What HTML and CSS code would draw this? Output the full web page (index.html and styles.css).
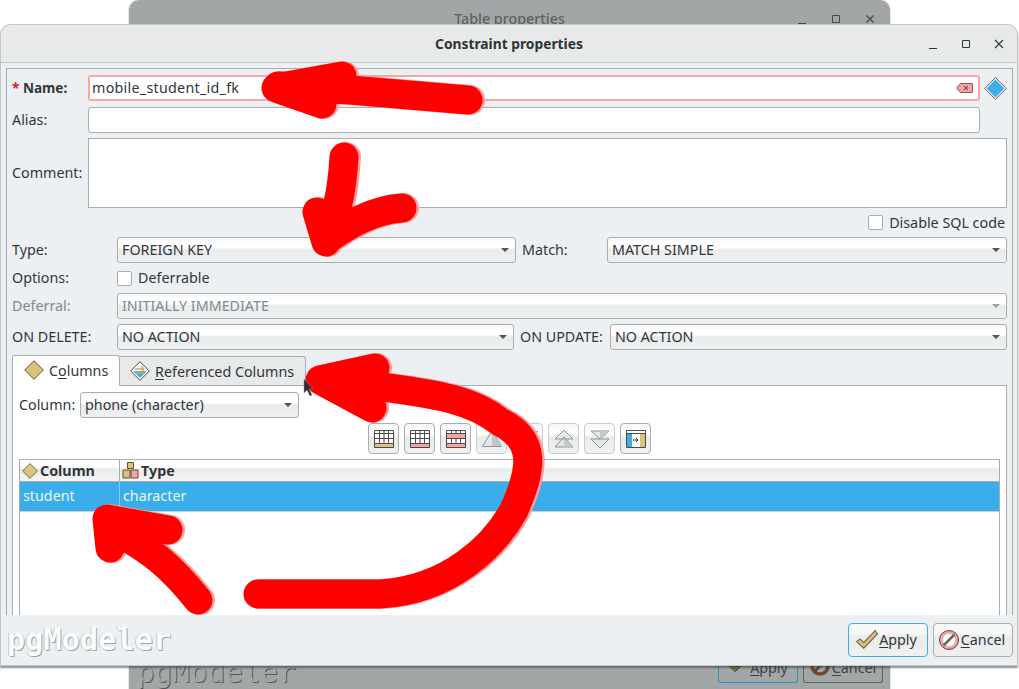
FILE: index.html
```html
<!DOCTYPE html>
<html lang="en">
<head>
<meta charset="utf-8">
<title>Constraint properties</title>
<link rel="stylesheet" href="styles.css">
</head>
<body>
<svg class="defs" width="0" height="0" aria-hidden="true">
  <defs>
    <g id="grid">
      <path d="M1.5 1.500h19v17h-19z" fill="#fff"/>
      <path d="M1.500 1.500h19v17h-19zM1.500 4.500h19M1.500 9.500h19M1.500 14.500h19M6.500 1.500v17M11 1.500v17M15.500 1.500v17" fill="none" stroke="#4a4a4a"/>
    </g>
    <g id="scrib" fill="none" stroke-linecap="round" stroke-linejoin="round">
      <path d="M468 100L350 90L278 86M342 76L276 88L322 104"/>
      <path d="M344 157C342 190 338 210 326 240M402 208C372 210 348 225 326 240M317 212L326 242"/>
      <path d="M258 594L380 594C450 590 495 545 514 510C532 470 537 440 500 422C470 398 430 394 390 388L330 380M375 368L320 380L372 408"/>
      <path d="M198 600C170 565 150 550 118 532M168 530L107 519L110 548"/>
    </g>
  </defs>
</svg>

<div class="desk">
  <section class="win back">
    <header class="back-title">
      <span class="back-name">Table properties</span>
      <span class="back-ctl">
        <svg width="12" height="12" viewBox="0 0 12 12"><path d="M2 10.500h8" stroke="#44494b"/></svg>
        <svg width="12" height="12" viewBox="0 0 12 12"><path d="M2.500 2.500h7v7h-7z" fill="none" stroke="#44494b"/></svg>
        <svg width="12" height="12" viewBox="0 0 12 12"><path d="M2.500 2.500l7 7M9.500 2.500l-7 7" stroke="#44494b" stroke-width="1.300"/></svg>
      </span>
    </header>
    <footer class="back-foot">
      <span class="logo ghost">pgModeler</span>
      <span class="back-btns">
        <span class="back-btn focus">
          <svg width="20" height="18" viewBox="0 0 22 20"><path d="M1.500 11.500L4.500 9L8 12.500L18.500 1.500L20.500 4.500L8 17.500z" fill="#7a6f4c" stroke="#3e3a2d"/></svg>
          <span><u>A</u>pply</span>
        </span>
        <span class="back-btn">
          <svg width="20" height="20" viewBox="0 0 20 20"><circle cx="10" cy="10" r="8" fill="none" stroke="#70492f" stroke-width="3.500"/><path d="M4.500 15.500L15.500 4.500" stroke="#70492f" stroke-width="3"/></svg>
          <span><u>C</u>ancel</span>
        </span>
      </span>
    </footer>
  </section>

  <section class="win front">
    <header class="title">
      <span class="title-text">Constraint properties</span>
      <span class="ctl">
        <svg width="12" height="12" viewBox="0 0 12 12"><path d="M2 10.500h8" stroke="#31363b"/></svg>
        <svg width="12" height="12" viewBox="0 0 12 12"><path d="M2.500 2.500h7v7h-7z" fill="none" stroke="#31363b"/></svg>
        <svg width="12" height="12" viewBox="0 0 12 12"><path d="M2 2l8 8M10 2l-8 8" stroke="#31363b" stroke-width="1.100"/></svg>
      </span>
    </header>

    <main class="content">
      <div class="frame">
        <div class="row name-row">
          <label class="lbl lbl-name"><span class="req">*</span> Name:</label>
          <div class="input input-err">
            <span class="value">mobile_student_id_fk</span>
            <svg class="clear" width="17" height="10" viewBox="0 0 17 10"><path d="M.500 5L4.500.500h12v9h-12z" fill="#f5a3a3" stroke="#8a5a5a"/><path d="M8 3l4 4M12 3l-4 4" stroke="#6b3a3a"/></svg>
          </div>
          <svg class="diamond" width="23" height="23" viewBox="0 0 23 23"><path d="M11.500 .7L22.300 11.500L11.500 22.300L.7 11.500z" fill="#fff" stroke="#333" stroke-width=".8"/><path d="M11.500 2.500L20.500 11.500L11.500 20.500L2.500 11.500z" fill="#3daee9"/></svg>
        </div>
        <div class="row alias-row">
          <label class="lbl lbl-first">Alias:</label>
          <div class="input"></div>
          <span class="diamond-gap"></span>
        </div>
        <div class="row comment-row">
          <label class="lbl lbl-first">Comment:</label>
          <div class="textarea"></div>
        </div>
        <div class="row sql-row">
          <span class="check"></span><span class="txt">Disable SQL code</span>
        </div>
        <div class="row type-row">
          <label class="lbl lbl-wide">Type:</label>
          <div class="select sel-type">FOREIGN KEY<i class="arrow"></i></div>
          <label class="lbl lbl-match">Match:</label>
          <div class="select grow">MATCH SIMPLE<i class="arrow"></i></div>
        </div>
        <div class="row opt-row">
          <label class="lbl lbl-wide">Options:</label>
          <span class="check"></span><span class="txt">Deferrable</span>
        </div>
        <div class="row def-row">
          <label class="lbl lbl-wide off">Deferral:</label>
          <div class="select grow disabled">INITIALLY IMMEDIATE<i class="arrow"></i></div>
        </div>
        <div class="row del-row">
          <label class="lbl lbl-wide">ON DELETE:</label>
          <div class="select sel-del">NO ACTION<i class="arrow"></i></div>
          <label class="lbl lbl-upd">ON UPDATE:</label>
          <div class="select grow">NO ACTION<i class="arrow"></i></div>
        </div>

        <div class="tabs">
          <div class="tab active">
            <svg width="20" height="20" viewBox="0 0 20 20"><path d="M10 .7L19.300 10L10 19.300L.7 10z" fill="#dcc27a" stroke="#5d5130"/></svg>
            <span>C<u>o</u>lumns</span>
          </div>
          <div class="tab">
            <svg width="20" height="20" viewBox="0 0 20 20"><path d="M10 .7L19.300 10L10 19.300L.7 10z" fill="#fff" stroke="#444"/><path d="M3 10h14L10 17z" fill="#3daee9"/><path d="M5 8h9M11 5l3 3-3 3M15 12H6" fill="none" stroke="#c9a95a" stroke-width="1.300"/></svg>
            <span><u>R</u>eferenced Columns</span>
          </div>
        </div>
        <div class="pane">
          <div class="row col-row">
            <label class="lbl">Column:</label>
            <div class="select sel-col">phone (character)<i class="arrow"></i></div>
          </div>
          <div class="toolbar">
            <span class="tool"><svg width="22" height="20" viewBox="0 0 22 20"><use href="#grid"/><path d="M2 15h18v3H2z" fill="#dcc27a"/></svg></span>
            <span class="tool"><svg width="22" height="20" viewBox="0 0 22 20"><use href="#grid"/><path d="M2 15h18v3H2z" fill="#f5a3a3"/></svg></span>
            <span class="tool"><svg width="22" height="20" viewBox="0 0 22 20"><use href="#grid"/><path d="M2 5h18v4H2zM2 15h18v3H2z" fill="#f5a3a3"/></svg></span>
            <span class="tool dim"><svg width="22" height="20" viewBox="0 0 22 20"><path d="M11 1.500L20.500 17.500H1.500z" fill="#e4e7e8" stroke="#8c9496"/><path d="M11 2v15h9z" fill="#c3c8ca"/></svg></span>
            <span class="tool dim"><svg width="22" height="20" viewBox="0 0 22 20"><path d="M11 18.500L20.500 2.500H1.500z" fill="#e4e7e8" stroke="#8c9496"/></svg></span>
            <span class="tool dim"><svg width="22" height="20" viewBox="0 0 22 20"><path d="M11 1L20 10H2zM11 8L20 18H2z" fill="#e4e7e8" stroke="#8c9496"/><path d="M11 9v9h9z" fill="#c3c8ca"/></svg></span>
            <span class="tool dim"><svg width="22" height="20" viewBox="0 0 22 20"><path d="M11 10L20 2H2zM11 19L20 10H2z" fill="#e4e7e8" stroke="#8c9496"/><path d="M11 2v8l9-8z" fill="#c3c8ca"/></svg></span>
            <span class="tool"><svg width="22" height="20" viewBox="0 0 22 20"><path d="M1.500 1.500h19v17h-19z" fill="#fff" stroke="#4a4a4a"/><path d="M2 5h5v13H2z" fill="#3daee9"/><path d="M15 5h5v13h-5z" fill="#dcc27a"/><path d="M2 4.500h18" stroke="#4a4a4a"/><path d="M8 11h5M11 9l2 2-2 2" fill="none" stroke="#333"/></svg></span>
          </div>
          <div class="table">
            <div class="thead">
              <div class="th th-col">
                <svg width="16" height="16" viewBox="0 0 20 20"><path d="M10 .7L19.300 10L10 19.300L.7 10z" fill="#dcc27a" stroke="#5d5130"/></svg>
                <span>Column</span>
              </div>
              <div class="th">
                <svg width="17" height="17" viewBox="0 0 17 17"><path d="M5.500 .5h6v6h-6zM1 8h7v8H1z" fill="#dcc27a" stroke="#5d5130"/><path d="M9 8h7v8H9z" fill="#f5a3a3" stroke="#5d5130"/></svg>
                <span>Type</span>
              </div>
            </div>
            <div class="tr">
              <div class="td td-col">student</div>
              <div class="td">character</div>
            </div>
          </div>
        </div>
      </div>
    </main>

    <footer class="foot">
      <span class="logo">pgModeler</span>
      <span class="foot-btns">
        <span class="btn focus">
          <svg width="24" height="22" viewBox="0 0 22 20"><path d="M1.500 11.500L4.500 9L8 12.500L18.500 1.500L20.500 4.500L8 17.500z" fill="#dcc27a" stroke="#6a6248"/></svg>
          <span><u>A</u>pply</span>
        </span>
        <span class="btn">
          <svg width="20" height="20" viewBox="0 0 20 20"><circle cx="10" cy="10" r="8" fill="#fff" stroke="#f5a3a3" stroke-width="3.500"/><circle cx="10" cy="10" r="9.500" fill="none" stroke="#5a4a4a"/><path d="M4.500 15.500L15.500 4.500" stroke="#666" stroke-width="2.500"/></svg>
          <span><u>C</u>ancel</span>
        </span>
      </span>
    </footer>
  </section>

  <svg class="scribble" width="1019" height="689" viewBox="0 0 1019 689" aria-hidden="true">
    <use href="#scrib" stroke="#ff9c9c" stroke-width="30" transform="translate(2 0)"/>
    <use href="#scrib" stroke="#ff0000" stroke-width="29"/>
  </svg>
  <svg class="cursor" width="12" height="18" viewBox="0 0 12 18" aria-hidden="true"><path d="M1 0v14l3-3 3 6 2-1-3-6h4z" fill="#2b2b2b" stroke="#999" stroke-width=".5"/></svg>
</div>
</body>
</html>
```

FILE: styles.css
```css
* { box-sizing: border-box; }
html, body { margin: 0; padding: 0; }
body {
  width: 1019px;
  height: 689px;
  overflow: hidden;
  background: #fff;
  font-family: "Noto Sans", "Open Sans", sans-serif;
  font-size: 14.3px;
  color: #31363b;
}
.defs { position: absolute; }
.desk { position: relative; width: 1019px; height: 689px; overflow: hidden; }
.win { position: absolute; display: flex; flex-direction: column; }

/* window behind */
.back {
  left: 129px; top: 0; width: 761px; height: 689px;
  background: #a3a6a6;
  border-radius: 10px 10px 0 0;
  justify-content: space-between;
  box-shadow: 0 0 0 1px #e6e9e8;
}
.back-title { position: relative; height: 25px; display: flex; align-items: center; justify-content: center; }
.back-name { color: #5d6264; font-weight: 500; margin-top: 12px; }
.back-ctl { position: absolute; right: 14px; top: 13px; display: flex; gap: 22px; }
.back-foot { height: 29px; display: flex; justify-content: space-between; padding: 0 7px 6px 8px; }
.back-btns { display: flex; gap: 5px; }
.back-btn {
  width: 80px; height: 23px; border: 1px solid #5e6162; border-top: 0; border-radius: 0 0 3px 3px;
  display: flex; align-items: flex-start; justify-content: center; gap: 2px; color: #3f4244; line-height: 15px;
}
.back-btn svg { margin-top: -4px; }
.back-btn.focus { border-color: #2f8fc2; }

/* front window */
.front {
  left: 1px; top: 25px; width: 1016px; height: 640px;
  background: #edf0f3;
  border-radius: 10px 10px 0 0;
  box-shadow: 0 0 0 1px #c3c7c7, 0 2px 2px 1px rgba(50, 54, 56, .55);
}
.title {
  position: relative; flex: none; height: 38px;
  background: #e8eaea;
  border-bottom: 1px solid #c0cbcf;
  border-radius: 10px 10px 0 0;
  display: flex; align-items: center; justify-content: center;
}
.title-text { font-weight: 700; font-size: 13.800px; color: #2e3336; padding-bottom: 1px; }
.ctl { position: absolute; right: 12px; top: 13px; display: flex; gap: 21px; }
.content { flex: 1; min-height: 0; padding: 5px 4px 0 5px; display: flex; }
.frame {
  flex: 1; min-width: 0;
  border: 1px solid #a8adb0; border-bottom: 0;
  padding: 6px 5px 0;
  display: flex; flex-direction: column;
  overflow: hidden;
}
.row { display: flex; align-items: center; flex: none; }
.name-row, .alias-row { height: 26px; }
.alias-row { margin-top: 6px; }
.comment-row { height: 70px; margin-top: 5px; }
.sql-row { height: 15px; margin-top: 7px; justify-content: flex-end; padding-right: 2px; }
.type-row { height: 26px; margin-top: 7px; }
.opt-row { height: 16px; margin-top: 7px; }
.def-row { height: 26px; margin-top: 7px; }
.del-row { height: 26px; margin-top: 5px; }

.lbl { flex: none; width: 76px; white-space: nowrap; padding-bottom: 2px; }
.lbl-first { width: 76px; }
.lbl-name { font-weight: 700; font-size: 13.600px; }
.req { color: #e0202a; }
.lbl-wide { width: 105px; }
.lbl-match { width: 85px; margin-left: 6px; }
.lbl-upd { width: 90px; margin-left: 6px; padding-right: 0; }
.off { color: #7c8a92; }
.txt { padding-bottom: 2px; }
.sql-row .txt { padding-bottom: 0; margin-left: 6px; }
.input {
  flex: 1; height: 26px; min-width: 0;
  background: #fff; border: 1px solid #a8adb0; border-radius: 3px;
  display: flex; align-items: center; justify-content: space-between;
  padding: 0 5px 0 3px;
}
.value { padding-bottom: 2px; letter-spacing: .26px; }
.input-err { border: 2px solid #ffa4a4; padding-left: 2px; }
.clear { flex: none; }
.diamond { flex: none; margin-left: 4px; }
.diamond-gap { flex: none; width: 27px; }
.textarea { flex: 1; height: 70px; background: #fff; border: 1px solid #a8adb0; }
.check { flex: none; width: 15px; height: 15px; background: #fff; border: 1px solid #a8adb0; border-radius: 2px; }
.opt-row .txt { margin-left: 6px; }

.select {
  position: relative; height: 26px; min-width: 0;
  border: 1px solid #a8adb0; border-radius: 3px;
  background: linear-gradient(#f6f7f7 0, #fff 20%, #fff 40%, #e9ebec 50%, #eff1f1 100%);
  display: flex; align-items: center; padding: 0 0 2px 4px;
  white-space: nowrap;
}
.grow { flex: 1; }
.sel-type { width: 399px; flex: none; }
.sel-del { width: 397px; flex: none; }
.sel-col { width: 219px; flex: none; }
.arrow {
  position: absolute; right: 6px; top: 10px;
  width: 0; height: 0;
  border-left: 4px solid transparent; border-right: 4px solid transparent;
  border-top: 4px solid #50575b;
}
.disabled { color: #7c8a92; }
.disabled .arrow { border-top-color: #9aa0a4; }

.tabs { display: flex; align-items: flex-end; flex: none; height: 31px; margin-top: 4px; position: relative; }
.tab {
  display: flex; align-items: center; gap: 5px;
  height: 29px; padding: 0 11px 0 10px;
  background: #e8eaea; border: 1px solid #a8adb0; border-left: 0; border-bottom: 0;
  border-radius: 0 3px 0 0;
}
.tab.active {
  height: 31px; width: 108px; padding: 0 0 2px 11px; margin-bottom: -1px;
  background: #fff; border: 1px solid #a8adb0; border-bottom: 0; border-radius: 3px 3px 0 0;
  position: relative; z-index: 1;
}
.pane {
  flex: 1; min-height: 0;
  background: #fff; border: 1px solid #a8adb0; border-bottom: 0;
  padding: 6px 6px 0;
  display: flex; flex-direction: column;
}
.col-row { height: 26px; }
.col-row .lbl { width: 61px; }
.toolbar { flex: none; display: flex; justify-content: flex-start; gap: 5px; margin-top: 5px; padding-left: 349px; }
.tool {
  width: 31px; height: 31px;
  border: 1px solid #a8adb0; border-radius: 4px;
  background: linear-gradient(#f6f7f7 0, #fff 35%, #e8eaeb 45%, #eff1f1 100%);
  display: flex; align-items: center; justify-content: center;
}
.tool.dim { border-color: #c9cdcf; }
.table { flex: 1; min-height: 0; margin-top: 5px; border: 1px solid #a8adb0; border-bottom: 0; display: flex; flex-direction: column; }
.thead { display: flex; flex: none; height: 22px; border-bottom: 1px solid #a8adb0; background: linear-gradient(#fff 0, #fff 30%, #e9ebec 45%, #f4f5f5 100%); }
.th { display: flex; align-items: center; gap: 2px; padding-left: 2px; font-weight: 700; }
.th span { padding-bottom: 1px; }
.th-col { width: 100px; flex: none; border-right: 1px solid #a8adb0; }
.tr { display: flex; flex: none; height: 30px; background: #3aaeea; color: #eaf6fc; border-bottom: 1px solid #c8d3d8; }
.td { display: flex; align-items: center; padding: 0 0 2px 3px; }
.td-col { width: 100px; flex: none; border-right: 1px solid #8ccdee; }

.foot { flex: none; height: 50px; background: #edf0f3; display: flex; align-items: flex-start; justify-content: space-between; padding: 8px 4px 0 6px; position: relative; }
.logo {
  font-family: "DejaVu Sans Mono", monospace; font-size: 30px; font-weight: 700; line-height: 34px;
  color: #fbfcfc; letter-spacing: .2px;
  text-shadow: 1px 1px 0 #9ea3a5, -1px 0 0 #c4c8ca;
}
.ghost { color: #a3a6a6; text-shadow: 1px 1px 0 #55595b; font-size: 29px; font-weight: 400; line-height: 24px; }
.foot-btns { display: flex; gap: 5px; }
.btn {
  width: 80px; height: 34px;
  border: 1px solid #a8adb0; border-radius: 4px;
  background: linear-gradient(#f6f7f7 0, #f6f7f7 30%, #e9ebec 40%, #eff1f1 100%);
  display: flex; align-items: center; justify-content: center; gap: 2px; padding-right: 2px;
}
.btn span { padding-bottom: 1px; }
.btn.focus { border-color: #3daee9; gap: 0; padding-right: 4px; }
u { text-underline-offset: 2px; }

.scribble { position: absolute; left: 0; top: 0; pointer-events: none; }
.cursor { position: absolute; left: 303px; top: 379px; }
```
